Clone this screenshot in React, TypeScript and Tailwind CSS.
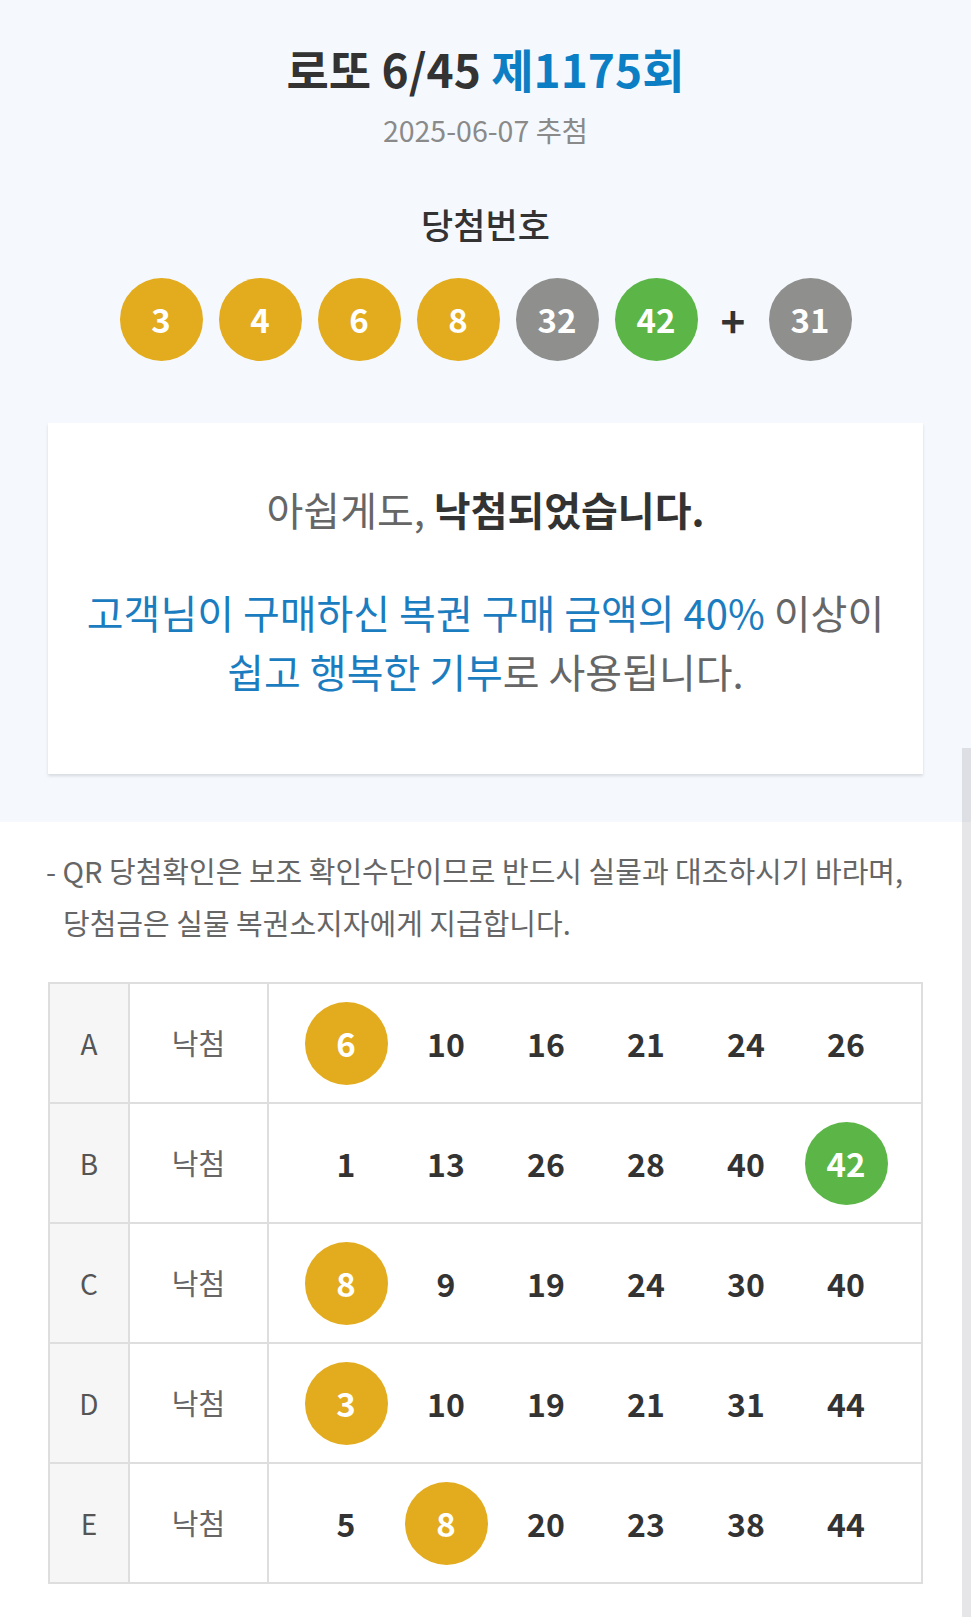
import React from 'react';

// ─── data ───────────────────────────────────────────────────────────────────
const WIN = [3, 4, 6, 8, 32, 42];
const BONUS = 31;

const GAMES: { label: string; nums: number[] }[] = [
  { label: 'A', nums: [6, 10, 16, 21, 24, 26] },
  { label: 'B', nums: [1, 13, 26, 28, 40, 42] },
  { label: 'C', nums: [8, 9, 19, 24, 30, 40] },
  { label: 'D', nums: [3, 10, 19, 21, 31, 44] },
  { label: 'E', nums: [5, 8, 20, 23, 38, 44] },
];

// ─── helpers ────────────────────────────────────────────────────────────────
function ballColor(n: number): string {
  if (n <= 10) return 'bg-[#e3ab1e]';
  if (n <= 20) return 'bg-[#2f86c8]';
  if (n <= 30) return 'bg-[#e0554d]';
  if (n <= 40) return 'bg-[#8f908e]';
  return 'bg-[#5bb647]';
}

function Ball({ n }: { n: number }) {
  return (
    <span
      className={`flex h-[83px] w-[83px] shrink-0 items-center justify-center rounded-full text-[33px] font-bold leading-none text-white ${ballColor(n)}`}
    >
      {n}
    </span>
  );
}

// ─── main ───────────────────────────────────────────────────────────────────
export default function App() {
  return (
    <div className="relative min-h-[1617px] bg-white font-['Noto_Sans_CJK_KR','Noto_Sans',sans-serif] text-[#333]">
      {/* top result section */}
      <section className="bg-[#f5f9fd] pt-[40px] pb-[48px]">
        <h1 className="text-center text-[46px] font-bold leading-[56px] text-[#333]">
          로또 6/45 <span className="text-[#0b7ec4]">제1175회</span>
        </h1>
        <p className="mt-[14px] text-center text-[28.5px] leading-[40px] text-[#8a8a8a]">2025-06-07 추첨</p>

        <h2 className="mt-[52px] text-center text-[35px] font-medium leading-[44px] text-[#333]">당첨번호</h2>
        <div className="mt-[32px] flex items-center justify-center gap-[16px]">
          {WIN.map((n) => (
            <Ball key={n} n={n} />
          ))}
          <span className="w-[39px] text-center text-[42px] font-bold leading-none text-[#333]">+</span>
          <Ball n={BONUS} />
        </div>

        <div className="mx-[48px] mt-[62px] bg-white pt-[60px] pb-[73px] text-center shadow-[0_2px_3px_rgba(0,0,0,0.13)]">
          <p className="text-[40px] leading-[52px] text-[#666]">
            아쉽게도, <b className="font-bold text-[#333]">낙첨되었습니다.</b>
          </p>
          <p className="mt-[48px] text-[40px] leading-[59px] text-[#666]">
            <span className="text-[#1b7dbf]">고객님이 구매하신 복권 구매 금액의 40%</span> 이상이
            <br />
            <span className="text-[#1b7dbf]">쉽고 행복한 기부</span>로 사용됩니다.
          </p>
        </div>
      </section>

      {/* notice */}
      <p className="mx-[46px] mt-[22px] pl-[17px] -indent-[17px] text-[29px] leading-[52px] text-[#666]">
        - QR 당첨확인은 보조 확인수단이므로 반드시 실물과 대조하시기 바라며,
        <br />
        당첨금은 실물 복권소지자에게 지급합니다.
      </p>

      {/* my games */}
      <table className="mx-[48px] mt-[34px] w-[875px] border-collapse border-2 border-[#dedede]">
        <tbody>
          {GAMES.map((g) => (
            <tr key={g.label} className="h-[120px]">
              <td className="w-[80px] border-2 border-[#dedede] bg-[#f6f6f6] text-center text-[28px] text-[#555]">
                {g.label}
              </td>
              <td className="w-[139px] border-2 border-[#dedede] text-center text-[29px] text-[#666]">낙첨</td>
              <td className="border-2 border-[#dedede] pl-[27px]">
                <div className="flex items-center">
                  {g.nums.map((n) => (
                    <span key={n} className="flex w-[100px] justify-center">
                      {WIN.includes(n) ? (
                        <Ball n={n} />
                      ) : (
                        <span className="text-[32px] font-bold leading-none text-[#333]">{n}</span>
                      )}
                    </span>
                  ))}
                </div>
              </td>
            </tr>
          ))}
        </tbody>
      </table>

      {/* scrollbar track */}
      <div className="absolute top-[748px] right-0 bottom-0 w-[9px] bg-[rgba(50,40,60,0.12)]" />
    </div>
  );
}
